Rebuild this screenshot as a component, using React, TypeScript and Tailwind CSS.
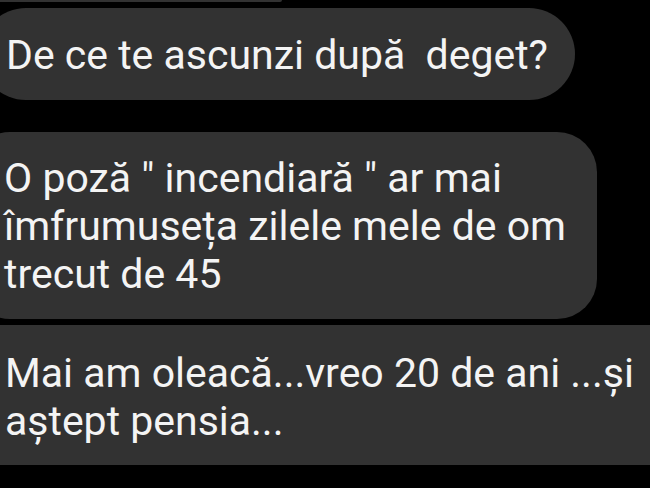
const FONT = "font-['Roboto','Liberation_Sans',sans-serif]";

function Bubble({
  children,
  className,
}: {
  children: React.ReactNode;
  className: string;
}) {
  return (
    <div
      className={`shrink-0 bg-[#323232] text-[#f4f4f4] text-[41px] leading-[48px] whitespace-pre-wrap ${className}`}
    >
      {children}
    </div>
  );
}

export default function App() {
  return (
    <div className={`w-[650px] h-[488px] overflow-hidden bg-black flex flex-col ${FONT}`}>
      {/* tail of the previous message */}
      <div className="shrink-0 h-[2px] w-[282px] bg-[#323232] rounded-br-[6px]" />

      <Bubble className="mt-[6px] -ml-[20px] w-[595px] h-[92px] rounded-full pl-[26px] pt-[23px]">
        De ce te ascunzi după  deget?
      </Bubble>

      <Bubble className="mt-[32px] -ml-[30px] w-[627px] h-[187px] rounded-[40px] pl-[34px] pt-[22px]">
        {"O poză \" incendiară \" ar mai\nîmfrumuseța zilele mele de om\ntrecut de 45"}
      </Bubble>

      <Bubble className="mt-[6px] -ml-[30px] w-[720px] h-[140px] rounded-[30px] pl-[35px] pt-[24px]">
        {"Mai am oleacă...vreo 20 de ani ...și\naștept pensia..."}
      </Bubble>
    </div>
  );
}
